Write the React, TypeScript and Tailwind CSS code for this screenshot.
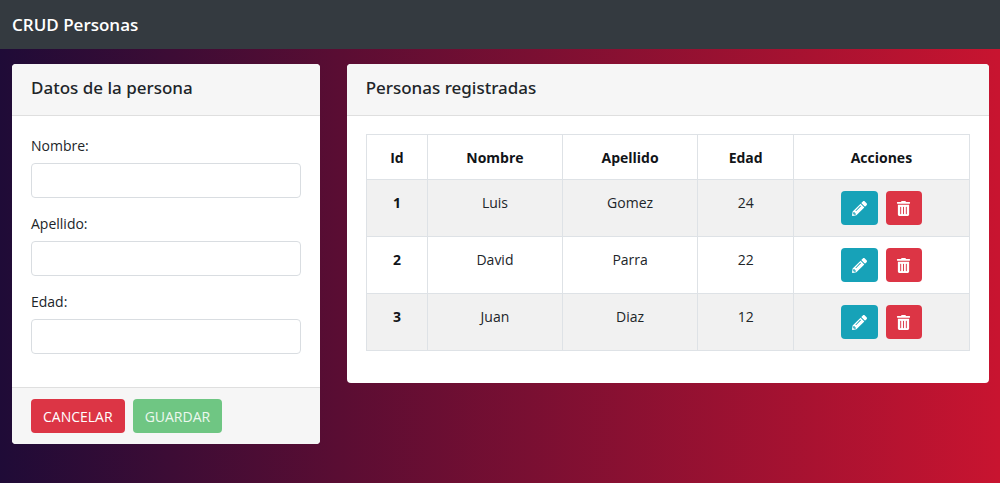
import React from "react";
import { FaPencilAlt, FaTrashAlt } from "react-icons/fa";

type Person = { id: number; name: string; surname: string; age: number };

const people: Person[] = [
  { id: 1, name: "Luis", surname: "Gomez", age: 24 },
  { id: 2, name: "David", surname: "Parra", age: 22 },
  { id: 3, name: "Juan", surname: "Diaz", age: 12 },
];

const fields = [
  { id: "nombre", label: "Nombre:" },
  { id: "apellido", label: "Apellido:" },
  { id: "edad", label: "Edad:" },
];

const columns = [
  { title: "Id", width: "w-[10.2%]" },
  { title: "Nombre", width: "w-[22.3%]" },
  { title: "Apellido", width: "w-[22.5%]" },
  { title: "Edad", width: "w-[15.8%]" },
  { title: "Acciones", width: "w-[29.2%]" },
];

function CardHeader({ children }: { children: React.ReactNode }) {
  return (
    <header className="border-b border-[#dfdfdf] bg-[#f6f6f6] px-[19px] pt-3 pb-4">
      <h2 className="font-['Noto_Sans',sans-serif] text-[17px] leading-[23px] font-medium text-[#212529]">{children}</h2>
    </header>
  );
}

function PersonForm() {
  return (
    <form className="overflow-hidden rounded bg-white" onSubmit={(e) => e.preventDefault()}>
      <CardHeader>Datos de la persona</CardHeader>
      <div className="flex flex-col gap-[14px] px-[19px] pt-[18px] pb-[33px]">
        {fields.map((f) => (
          <div key={f.id} className="flex flex-col gap-[6px]">
            <label htmlFor={f.id} className="leading-[23px]">{f.label}</label>
            <input
              id={f.id}
              type="text"
              className="h-[35px] w-full rounded border border-[#d9dde1] bg-white px-3 outline-none focus:border-[#80bdff]"
            />
          </div>
        ))}
      </div>
      <footer className="flex gap-2 border-t border-[#dfdfdf] bg-[#f6f6f6] px-[19px] py-[11px]">
        <button type="button" className="h-[34px] rounded bg-[#dc3545] px-3 text-white">CANCELAR</button>
        <button type="submit" disabled className="h-[34px] rounded bg-[#6fc683] px-3 text-[#edf8ef]">GUARDAR</button>
      </footer>
    </form>
  );
}

function PeopleTable() {
  return (
    <section className="col-span-2 overflow-hidden rounded bg-white">
      <CardHeader>Personas registradas</CardHeader>
      <div className="px-[19px] pt-[18px] pb-8">
        <table className="w-full table-fixed border-collapse text-center">
          <thead>
            <tr className="h-[45px]">
              {columns.map((c) => (
                <th key={c.title} scope="col" className={`${c.width} border border-[#dee2e6] font-bold text-[#111418]`}>
                  {c.title}
                </th>
              ))}
            </tr>
          </thead>
          <tbody>
            {people.map((p) => (
              <tr key={p.id} className="h-[57px] align-top odd:bg-[#f1f1f1]">
                <th scope="row" className="border border-[#dee2e6] pt-[11px] font-bold text-[#111418]">{p.id}</th>
                <td className="border border-[#dee2e6] pt-[11px]">{p.name}</td>
                <td className="border border-[#dee2e6] pt-[11px]">{p.surname}</td>
                <td className="border border-[#dee2e6] pt-[11px]">{p.age}</td>
                <td className="border border-[#dee2e6] pt-[11px]">
                  <div className="flex justify-center gap-2">
                    <button type="button" aria-label="Editar" className="flex h-[34px] w-[37px] items-center justify-center rounded bg-[#17a2b8] text-[15px] text-white">
                      <FaPencilAlt />
                    </button>
                    <button type="button" aria-label="Eliminar" className="flex h-[34px] w-[36px] items-center justify-center rounded bg-[#dc3545] text-[15px] text-white">
                      <FaTrashAlt />
                    </button>
                  </div>
                </td>
              </tr>
            ))}
          </tbody>
        </table>
      </div>
    </section>
  );
}

export default function App() {
  return (
    <div className="min-h-screen bg-[linear-gradient(90deg,#1f0b37_0%,#5a0d33_34%,#c81430_100%)] font-['Open_Sans','Noto_Sans',sans-serif] text-[14px] leading-[23px] text-[#212529]">
      <nav className="bg-[#343a40] px-3 py-[13px]">
        <a href="#" className="block text-[17px] leading-[23px] font-semibold text-white">CRUD Personas</a>
      </nav>
      <main className="grid grid-cols-3 items-start gap-[27px] pt-[15px] pr-[11px] pb-10 pl-3">
        <PersonForm />
        <PeopleTable />
      </main>
    </div>
  );
}
